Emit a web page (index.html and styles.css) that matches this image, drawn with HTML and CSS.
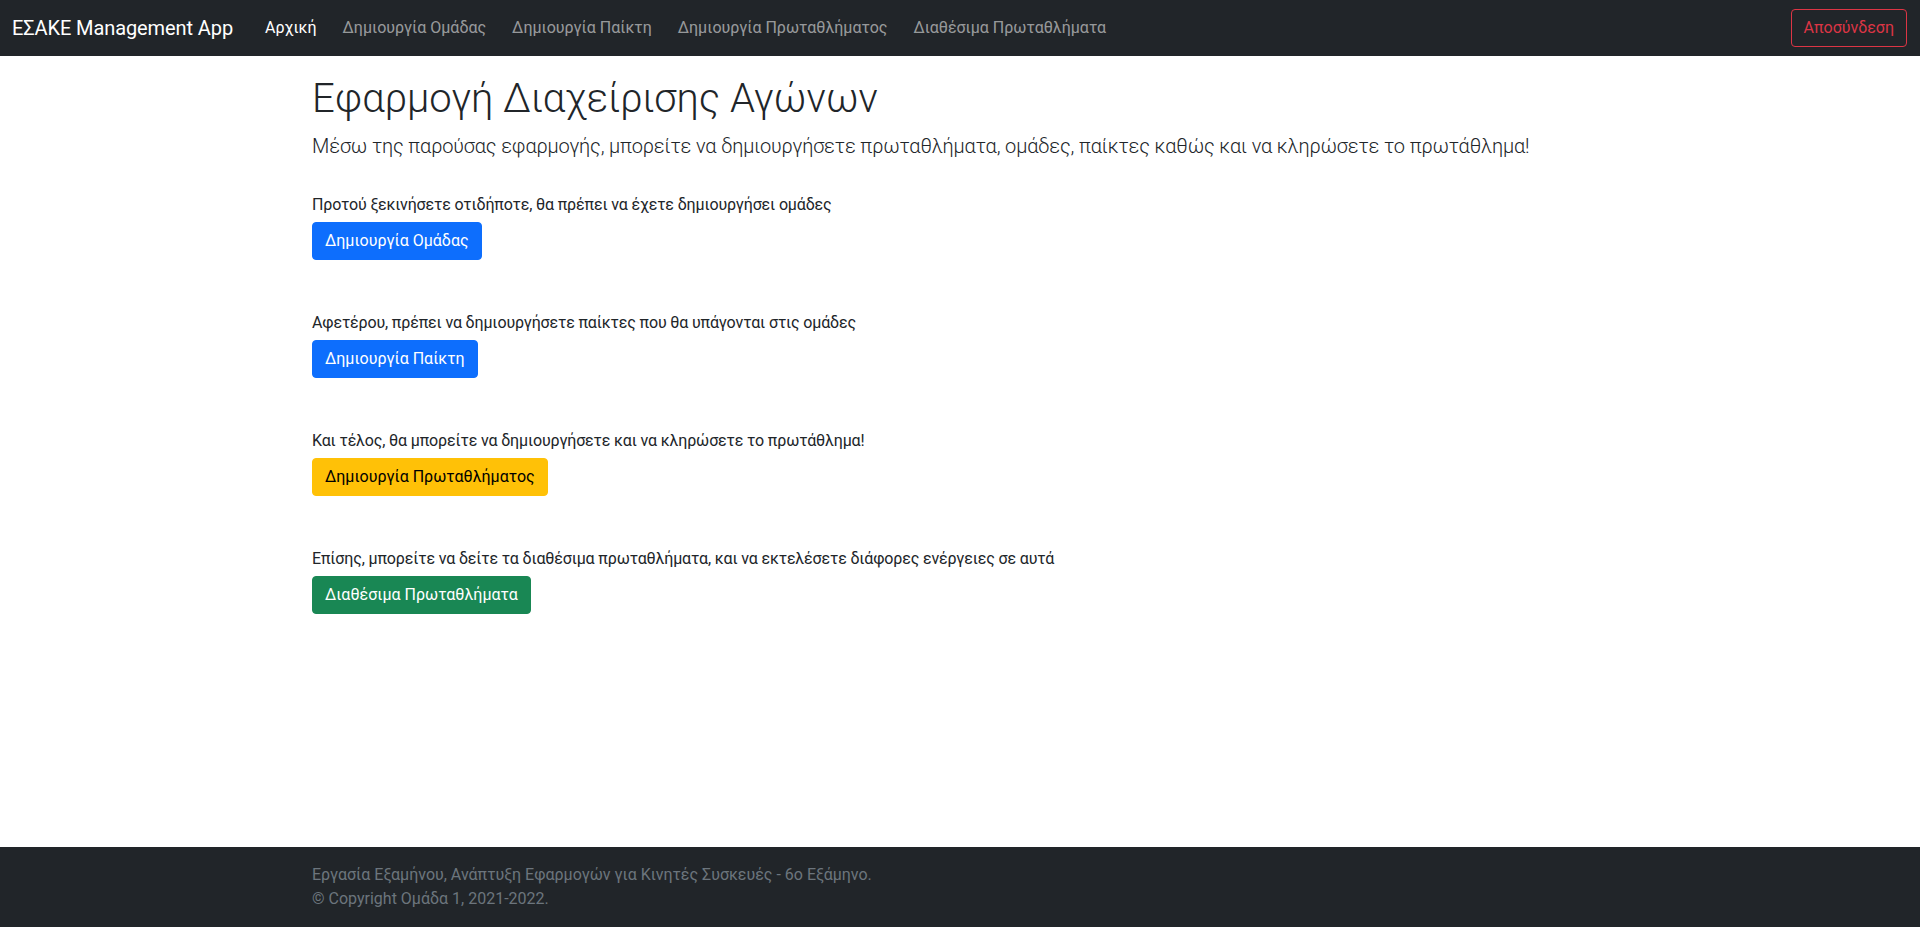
FILE: index.html
```html
<!DOCTYPE html>
<html lang="el">
<head>
<meta charset="utf-8">
<title>ΕΣΑΚΕ Management App</title>
<link rel="stylesheet" href="styles.css">
</head>
<body>
<nav class="navbar">
  <a class="brand" href="#">ΕΣΑΚΕ Management App</a>
  <ul class="nav">
    <li><a class="nav-link active" href="#">Αρχική</a></li>
    <li><a class="nav-link" href="#">Δημιουργία Ομάδας</a></li>
    <li><a class="nav-link" href="#">Δημιουργία Παίκτη</a></li>
    <li><a class="nav-link" href="#">Δημιουργία Πρωταθλήματος</a></li>
    <li><a class="nav-link" href="#">Διαθέσιμα Πρωταθλήματα</a></li>
  </ul>
  <a class="btn btn-outline-danger" href="#">Αποσύνδεση</a>
</nav>
<main class="container">
  <h1 class="display">Εφαρμογή Διαχείρισης Αγώνων</h1>
  <p class="lead">Μέσω της παρούσας εφαρμογής, μπορείτε να δημιουργήσετε πρωταθλήματα, ομάδες, παίκτες καθώς και να κληρώσετε το πρωτάθλημα!</p>
  <section class="step">
    <p>Προτού ξεκινήσετε οτιδήποτε, θα πρέπει να έχετε δημιουργήσει ομάδες</p>
    <a class="btn btn-primary" href="#">Δημιουργία Ομάδας</a>
  </section>
  <section class="step">
    <p>Αφετέρου, πρέπει να δημιουργήσετε παίκτες που θα υπάγονται στις ομάδες</p>
    <a class="btn btn-primary" href="#">Δημιουργία Παίκτη</a>
  </section>
  <section class="step">
    <p>Και τέλος, θα μπορείτε να δημιουργήσετε και να κληρώσετε το πρωτάθλημα!</p>
    <a class="btn btn-warning" href="#">Δημιουργία Πρωταθλήματος</a>
  </section>
  <section class="step">
    <p>Επίσης, μπορείτε να δείτε τα διαθέσιμα πρωταθλήματα, και να εκτελέσετε διάφορες ενέργειες σε αυτά</p>
    <a class="btn btn-success" href="#">Διαθέσιμα Πρωταθλήματα</a>
  </section>
</main>
<footer class="footer">
  <div class="container footer-inner">
    <span>Εργασία Εξαμήνου, Ανάπτυξη Εφαρμογών για Κινητές Συσκευές - 6ο Εξάμηνο.</span>
    <span>© Copyright Ομάδα 1, 2021-2022.</span>
  </div>
</footer>
</body>
</html>
```

FILE: styles.css
```css
* { box-sizing: border-box; }
html, body { margin: 0; padding: 0; }
body {
  font-family: Roboto, "Noto Sans", "Liberation Sans", sans-serif;
  font-size: 16px;
  line-height: 1.5;
  color: #212529;
  background: #fff;
  min-height: 100vh;
  display: flex;
  flex-direction: column;
}
a { text-decoration: none; }

.navbar {
  height: 56px;
  background: #212529;
  display: flex;
  align-items: center;
  padding: 0 12px;
}
.brand {
  color: #fff;
  font-size: 20px;
  line-height: 30px;
  margin-right: 24px;
  white-space: nowrap;
  letter-spacing: -0.1px;
}
.nav {
  list-style: none;
  margin: 0;
  padding: 0;
  display: flex;
  gap: 10px;
  flex: 1;
}
.nav-link {
  display: block;
  padding: 8px 8px;
  color: rgba(255,255,255,.55);
  font-size: 16px;
}
.nav-link.active { color: #fff; }

.btn {
  display: inline-block;
  padding: 6px 12px;
  font-size: 16px;
  line-height: 24px;
  border: 1px solid transparent;
  border-radius: 4px;
  white-space: nowrap;
}
.btn-outline-danger {
  color: #dc3545;
  border-color: #dc3545;
  margin-right: 1px;
}
.btn-primary { background: #0d6efd; border-color: #0d6efd; color: #fff; }
.btn-warning { background: #ffc107; border-color: #ffc107; color: #000; }
.btn-success { background: #198754; border-color: #198754; color: #fff; }

.container {
  width: 1320px;
  margin: 0 auto;
  padding: 0 12px;
}
main.container {
  flex: 1;
  padding-top: 19px;
}
.display {
  font-size: 40px;
  font-weight: 300;
  line-height: 1.2;
  margin: 0 0 8px;
}
.lead {
  font-size: 20px;
  font-weight: 300;
  line-height: 30px;
  margin: 0 0 32px;
  letter-spacing: -0.15px;
}
.step { margin-bottom: 51px; }
.step p { margin: 0 0 5px; letter-spacing: -0.15px; }

.footer {
  background: #212529;
  padding: 16px 0;
}
.footer-inner {
  display: flex;
  flex-direction: column;
  color: #6c757d;
  line-height: 24px;
}
```
